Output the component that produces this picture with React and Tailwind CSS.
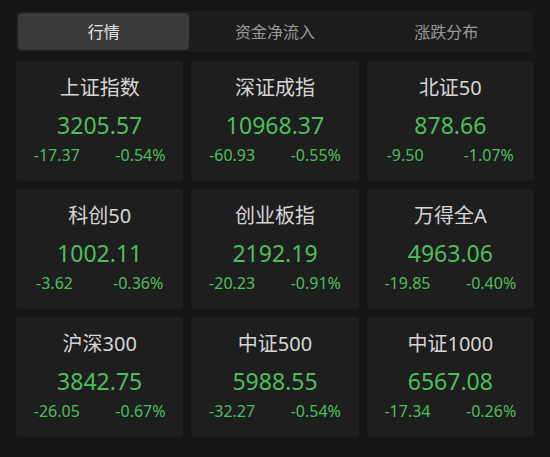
import React, { useState } from 'react'

const tabs = ['行情', '资金净流入', '涨跌分布']

const indices = [
  { name: '上证指数', value: '3205.57', change: '-17.37', pct: '-0.54%' },
  { name: '深证成指', value: '10968.37', change: '-60.93', pct: '-0.55%' },
  { name: '北证50', value: '878.66', change: '-9.50', pct: '-1.07%' },
  { name: '科创50', value: '1002.11', change: '-3.62', pct: '-0.36%' },
  { name: '创业板指', value: '2192.19', change: '-20.23', pct: '-0.91%' },
  { name: '万得全A', value: '4963.06', change: '-19.85', pct: '-0.40%' },
  { name: '沪深300', value: '3842.75', change: '-26.05', pct: '-0.67%' },
  { name: '中证500', value: '5988.55', change: '-32.27', pct: '-0.54%' },
  { name: '中证1000', value: '6567.08', change: '-17.34', pct: '-0.26%' },
]

function IndexCard({ item }) {
  return (
    <div className="h-[120px] bg-[#1e1e1e] rounded-[4px] flex flex-col items-center pt-[13px]">
      <div className="text-[20px] leading-[28px] text-[#d6d6d6]">{item.name}</div>
      <div className="mt-[8px] text-[23px] leading-[30px] text-[#4cbf5c]">
        {item.value}
      </div>
      <div className="mt-[5px] w-full flex justify-around text-[16px] leading-[20px] text-[#4cbf5c]">
        <span>{item.change}</span>
        <span>{item.pct}</span>
      </div>
    </div>
  )
}

export default function App() {
  const [active, setActive] = useState(0)

  return (
    <div
      className="w-[550px] h-[457px] bg-[#151515] px-[16px] pt-[11px]"
      style={{ fontFamily: '"Noto Sans", "Noto Sans CJK SC", sans-serif' }}
    >
      {/* Tabs */}
      <div className="h-[41px] bg-[#1c1c1c] rounded-[4px] p-[2px] grid grid-cols-3">
        {tabs.map((t, i) => (
          <button
            key={t}
            onClick={() => setActive(i)}
            className={`rounded-[4px] text-[16px] ${
              active === i ? 'bg-[#3a3a3a] text-[#e2e2e2]' : 'text-[#9a9a9a]'
            }`}
          >
            {t}
          </button>
        ))}
      </div>

      {/* Cards */}
      <div className="mt-[9px] grid grid-cols-3 gap-[8px]">
        {indices.map((item) => (
          <IndexCard key={item.name} item={item} />
        ))}
      </div>
    </div>
  )
}
